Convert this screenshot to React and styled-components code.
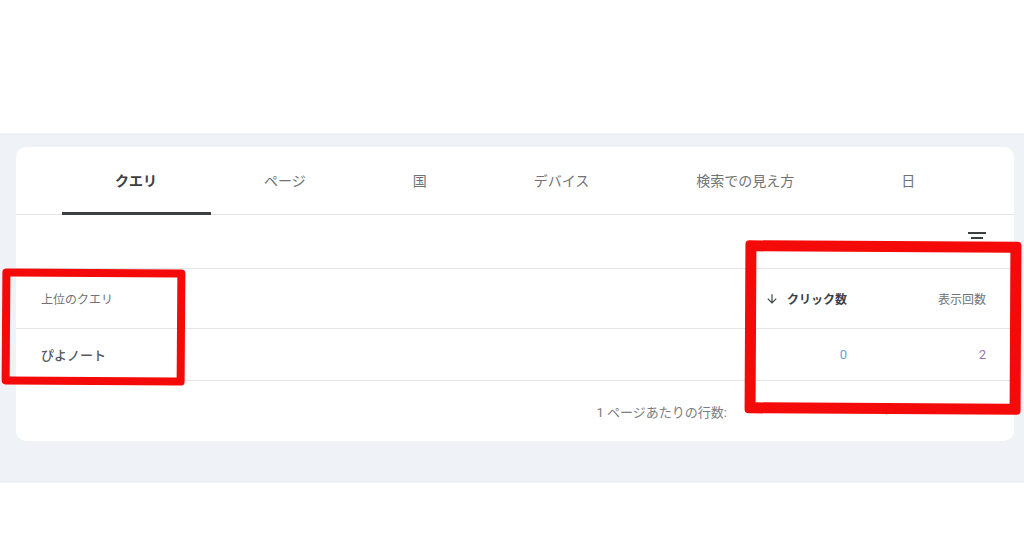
import React from 'react'
import styled, { createGlobalStyle } from 'styled-components'

const GlobalStyle = createGlobalStyle`
  html, body {
    margin: 0;
    padding: 0;
    background: #ffffff;
  }
  body {
    font-family: Roboto, "Noto Sans CJK JP", sans-serif;
  }
`

const Page = styled.div`
  position: relative;
  width: 1024px;
  height: 538px;
  overflow: hidden;
  background: #ffffff;
  padding-top: 133px;
  box-sizing: border-box;
`

const Band = styled.div`
  background: #eff2f7;
  height: 350px;
  padding: 14px 10px 0 16px;
  box-sizing: border-box;
`

const Card = styled.div`
  background: #ffffff;
  border-radius: 10px;
  height: 294px;
  display: flex;
  flex-direction: column;
`

const Tabs = styled.div`
  display: flex;
  height: 67px;
  padding-left: 46px;
  border-bottom: 1px solid #e3e5e8;
`

const Tab = styled.div`
  display: flex;
  align-items: center;
  justify-content: center;
  padding: 0 54px 0 53px;
  font-family: "Noto Sans CJK JP", sans-serif;
  font-size: 14px;
  font-weight: ${p => (p.$active ? 700 : 400)};
  color: ${p => (p.$active ? '#3c4043' : '#6f7377')};
  border-bottom: 3px solid ${p => (p.$active ? '#3c4043' : 'transparent')};
  margin-bottom: -1px;
`

const Toolbar = styled.div`
  height: 54px;
  display: flex;
  justify-content: flex-end;
  align-items: flex-start;
  padding: 11px 25px 0 0;
  box-sizing: border-box;
  border-bottom: 1px solid #e3e5e8;
`

const Row = styled.div`
  display: flex;
  align-items: center;
  height: ${p => p.$h}px;
  padding: 0 28px 0 25px;
  border-bottom: 1px solid #e3e5e8;
  box-sizing: border-box;
`

const QueryCell = styled.div`
  flex: 1;
  font-family: "Noto Sans CJK JP", sans-serif;
  font-size: ${p => (p.$head ? 12 : 13)}px;
  font-weight: ${p => (p.$head ? 400 : 500)};
  color: ${p => (p.$head ? '#6f7377' : '#55585c')};
`

const MetricCell = styled.div`
  width: 139px;
  display: flex;
  justify-content: flex-end;
  align-items: center;
  gap: 8px;
  font-family: Roboto, "Noto Sans CJK JP", sans-serif;
  font-size: ${p => (p.$head ? 12 : 13)}px;
  font-weight: ${p => (p.$bold ? 700 : 400)};
  color: ${p => p.$color};
`

const Footer = styled.div`
  flex: 1;
  display: flex;
  align-items: center;
  justify-content: flex-end;
  padding: 0 28px 0 0;
  font-family: Roboto, "Noto Sans CJK JP", sans-serif;
  font-size: 13px;
  color: #7a7e82;
`

const Pager = styled.div`
  width: 259px;
  display: flex;
  align-items: center;
  justify-content: space-between;
  padding-left: 30px;
  margin-top: -6px;
  box-sizing: border-box;
  color: #b4b8bc;
`

const Mark = styled.div`
  position: absolute;
  left: ${p => p.$x}px;
  top: ${p => p.$y}px;
  width: ${p => p.$w}px;
  height: ${p => p.$h}px;
  border: ${p => p.$b}px solid #f50a0a;
  border-radius: 4px;
  box-sizing: border-box;
  transform: rotate(${p => p.$r}deg);
  pointer-events: none;
`

const FilterIcon = () => (
  <svg width="24" height="24" viewBox="0 0 24 24" fill="#3c4043">
    <path d="M10 18h4v-2h-4v2zM3 6v2h18V6H3zm3 7h12v-2H6v2z" />
  </svg>
)

const DownArrow = () => (
  <svg width="14" height="14" viewBox="0 0 24 24" fill="#3c4043">
    <path d="M20 12l-1.41-1.41L13 16.17V4h-2v12.17l-5.58-5.59L4 12l8 8 8-8z" />
  </svg>
)

const tabs = ['クエリ', 'ページ', '国', 'デバイス', '検索での見え方', '日']

const App = () => {
  return (
    <Page>
      <GlobalStyle />
      <Band>
        <Card>
          <Tabs>
            {tabs.map((t, i) => (
              <Tab key={t} $active={i === 0}>{t}</Tab>
            ))}
          </Tabs>
          <Toolbar>
            <FilterIcon />
          </Toolbar>
          <Row $h={60}>
            <QueryCell $head>上位のクエリ</QueryCell>
            <MetricCell $head $bold $color="#3c4043">
              <DownArrow />
              <span>クリック数</span>
            </MetricCell>
            <MetricCell $head $color="#6f7377">表示回数</MetricCell>
          </Row>
          <Row $h={52}>
            <QueryCell>ぴよノート</QueryCell>
            <MetricCell $color="#6aa3d8">0</MetricCell>
            <MetricCell $color="#9c6fbf">2</MetricCell>
          </Row>
          <Footer>
            <span>1 ページあたりの行数:</span>
            <Pager>
              <span>10 ▾</span>
              <span>1～1/1</span>
              <span>‹ ›</span>
            </Pager>
          </Footer>
        </Card>
      </Band>
      <Mark $x={2} $y={269} $w={183} $h={116} $b={8} $r={0.4} />
      <Mark $x={745} $y={241} $w={276} $h={173} $b={11} $r={0.3} />
    </Page>
  )
}

export default App
